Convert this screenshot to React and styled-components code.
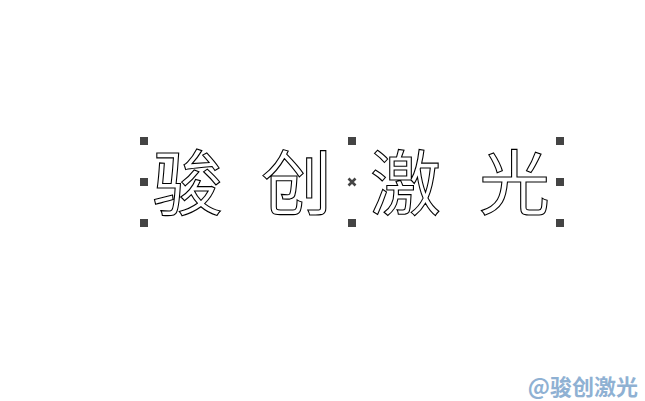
import React from "react";
import styled, { createGlobalStyle } from "styled-components";

const Global = createGlobalStyle`
  html, body { margin: 0; padding: 0; background: #fff; }
`;

const Page = styled.div`
  width: 645px;
  height: 401px;
  overflow: hidden;
  display: flex;
  flex-direction: column;
  background: #fff;
  box-sizing: border-box;
  padding: 137px 7px 0 140px;
`;

const Selection = styled.div`
  position: relative;
  width: 424px;
  height: 90px;
  flex: none;
`;

const Glyphs = styled.div`
  display: grid;
  grid-template-columns: repeat(4, 109px);
  padding: 6px 0 0 12px;
  font-family: "Noto Sans CJK SC", "Noto Sans CJK JP", sans-serif;
  font-size: 71px;
  font-weight: 400;
  line-height: 71px;
  color: #fff;
  -webkit-text-stroke: 1.1px #000;
`;

const Glyph = styled.span`
  display: block;
`;

const Handle = styled.i`
  position: absolute;
  width: 8px;
  height: 8px;
  background: #444;
  left: ${(p) => p.$x}px;
  top: ${(p) => p.$y}px;
`;

const CenterMark = styled.svg`
  position: absolute;
  left: 207px;
  top: 40px;
  width: 10px;
  height: 10px;
`;

const Watermark = styled.div`
  margin-top: auto;
  margin-bottom: 1px;
  align-self: flex-end;
  font-family: "Noto Sans CJK SC", "Noto Sans CJK JP", sans-serif;
  font-size: 22px;
  font-weight: 700;
  line-height: 30px;
  color: #8fb1d3;
`;

const handles = [
  [0, 0], [208, 0], [416, 0],
  [0, 41], [416, 41],
  [0, 82], [208, 82], [416, 82],
];

export default function App() {
  return (
    <Page>
      <Global />
      <Selection>
        <Glyphs>
          <Glyph>骏</Glyph>
          <Glyph>创</Glyph>
          <Glyph>激</Glyph>
          <Glyph>光</Glyph>
        </Glyphs>
        {handles.map(([x, y]) => (
          <Handle key={`${x}-${y}`} $x={x} $y={y} />
        ))}
        <CenterMark viewBox="0 0 10 10">
          <path d="M1.5 1.5 L8.5 8.5 M8.5 1.5 L1.5 8.5" stroke="#444" strokeWidth="2.6" fill="none" />
        </CenterMark>
      </Selection>
      <Watermark>@骏创激光</Watermark>
    </Page>
  );
}
